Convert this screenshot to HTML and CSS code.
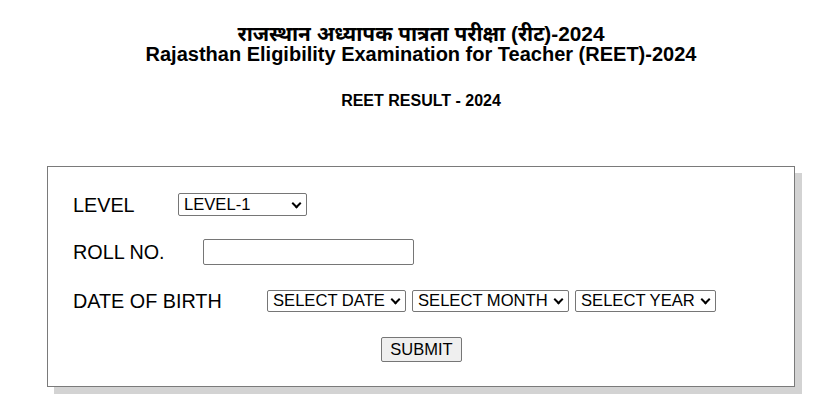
FILE: index.html
```html
<!DOCTYPE html>
<html lang="hi">
<head>
<meta charset="utf-8">
<title>REET Result 2024</title>
<link rel="stylesheet" href="styles.css">
</head>
<body>
<div class="page">
  <header class="header">
    <h1 class="title">
      <span class="title-line title-hi">राजस्थान अध्यापक पात्रता परीक्षा (रीट)-2024</span>
      <span class="title-line">Rajasthan Eligibility Examination for Teacher (REET)-2024</span>
    </h1>
    <h2 class="subtitle">REET RESULT - 2024</h2>
  </header>
  <form class="card">
    <div class="row">
      <label class="label label-level">LEVEL</label>
      <span class="sel"><select class="select select-level"><option>LEVEL-1</option><option>LEVEL-2</option></select></span>
    </div>
    <div class="row row-roll">
      <label class="label label-roll">ROLL NO.</label>
      <input class="input" type="text">
    </div>
    <div class="row row-dob">
      <label class="label label-dob">DATE OF BIRTH</label>
      <div class="dob">
        <span class="sel"><select class="select select-date"><option>SELECT DATE</option></select></span>
        <span class="sel"><select class="select select-month"><option>SELECT MONTH</option></select></span>
        <span class="sel"><select class="select select-year"><option>SELECT YEAR</option></select></span>
      </div>
    </div>
    <div class="actions">
      <button type="button" class="button">SUBMIT</button>
    </div>
  </form>
</div>
</body>
</html>
```

FILE: styles.css
```css
* { box-sizing: border-box; }

body {
  margin: 0;
  background: #ffffff;
  color: #000000;
  font-family: "Liberation Sans", Arial, "Noto Sans Devanagari", "Lohit Devanagari", "Noto Sans", sans-serif;
}

.page {
  padding-left: 24px;
  padding-bottom: 20px;
}

.header {
  text-align: center;
  padding-top: 23px;
}

.title {
  margin: 0;
  font-size: 20px;
  font-weight: bold;
  line-height: 21px;
}

.title-line {
  display: block;
}

.title-hi {
  font-size: 20.8px;
}

.subtitle {
  margin: 26px 0 0;
  font-size: 16px;
  font-weight: bold;
  line-height: 20px;
}

.card {
  margin: 55px 23px 0;
  border: 1px solid #7a7a7a;
  box-shadow: 7px 7px 0 #d3d3d3;
  padding: 26px 24px 24px 25px;
  height: 221px;
}

.row {
  display: flex;
  align-items: center;
}

.row-roll { margin-top: 23px; }
.row-dob { margin-top: 25px; }

.label {
  font-size: 19.8px;
  line-height: 22px;
  flex: none;
}

.label-level { width: 105px; }
.label-roll { width: 130px; }
.label-dob { width: 194px; }

.sel {
  position: relative;
  display: inline-block;
  flex: none;
}

.sel::after {
  content: "";
  position: absolute;
  right: 7px;
  top: 50%;
  width: 5px;
  height: 5px;
  margin-top: -5px;
  border-right: 2px solid #000;
  border-bottom: 2px solid #000;
  transform: rotate(45deg);
  pointer-events: none;
}

.select {
  -webkit-appearance: none;
  appearance: none;
  display: block;
  margin: 0;
  padding: 0 0 0 5px;
  border: 1px solid #767676;
  border-radius: 2px;
  background: #ffffff;
  color: #000;
  font-family: "Liberation Sans", Arial, sans-serif;
  font-size: 16.6px;
  height: 22px;
  line-height: 20px;
}

.select-level { width: 129px; height: 23px; }
.select-date { width: 139px; }
.select-month { width: 157px; }
.select-year { width: 141px; }

.dob {
  display: flex;
  gap: 6px;
}

.input {
  width: 211px;
  height: 26px;
  margin: 0;
  border: 1px solid #767676;
  border-radius: 2px;
  background: #fff;
  font-family: "Liberation Sans", Arial, sans-serif;
  font-size: 16px;
}

.actions {
  margin-top: 25px;
  display: flex;
  justify-content: center;
}

.button {
  width: 81px;
  height: 25px;
  margin: 0;
  padding: 0;
  border: 1px solid #767676;
  border-radius: 2px;
  background: #efefef;
  color: #000;
  font-family: "Liberation Sans", Arial, sans-serif;
  font-size: 16.5px;
  line-height: 23px;
}
```
